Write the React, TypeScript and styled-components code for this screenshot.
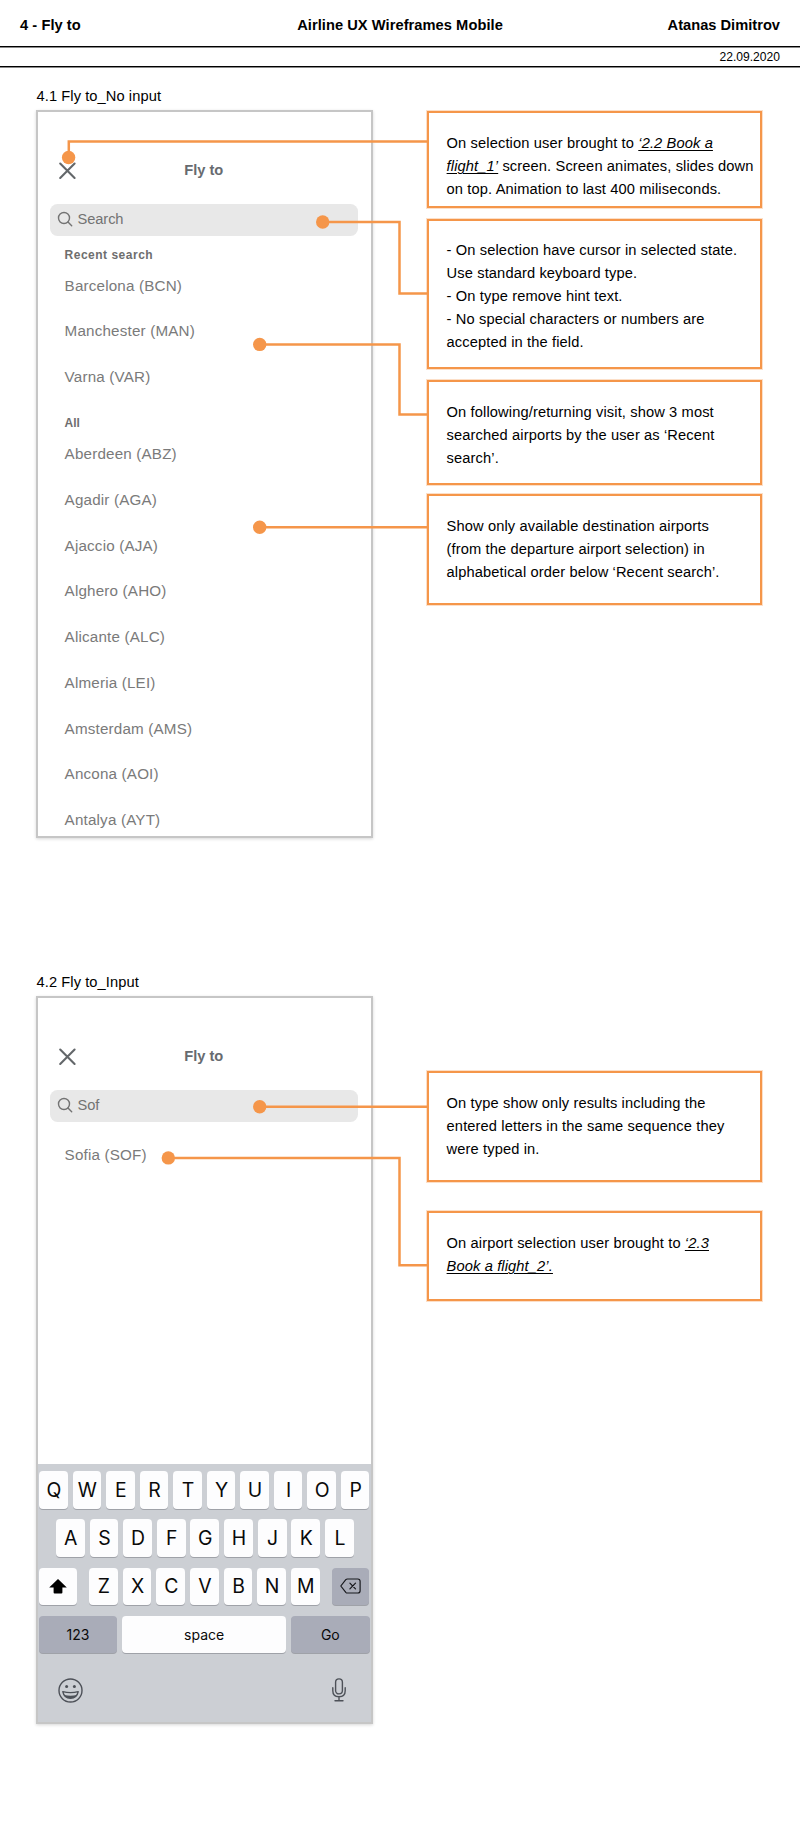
import React from 'react';
import styled, { createGlobalStyle } from 'styled-components';

const ORANGE = '#f5964a';

const GlobalStyle = createGlobalStyle`
  * { box-sizing: border-box; }
  body {
    margin: 0;
    background: #fff;
    font-family: "Liberation Sans", Arial, Helvetica, sans-serif;
    font-size: 14.67px;
    color: #000;
  }
`;

const Page = styled.main`
  width: 800px;
  height: 1826px;
  overflow: hidden;
  background: #fff;
`;

const PageHeader = styled.header`
  display: grid;
  grid-template-columns: 1fr auto 1fr;
  height: 46px;
  padding: 3px 20px 0;
  align-items: center;
  font-weight: 700;
  letter-spacing: 0.05px;
`;

const Author = styled.span`
  text-align: right;
  letter-spacing: 0;
`;

const DateBar = styled.div`
  height: 21px;
  padding: 0 20px;
  border-top: 1px solid #000;
  border-bottom: 1px solid #000;
  box-shadow: inset 0 1px 0 #8a8a8a, 0 1px 0 #8a8a8a;
  display: flex;
  justify-content: flex-end;
  align-items: center;
  font-size: 12.1px;
`;

const Section = styled.section<{ $height: number }>`
  position: relative;
  display: flex;
  flex-direction: column;
  height: ${(p) => p.$height}px;
  padding-left: 36px;
`;

const SectionLabel = styled.h2`
  margin: 0;
  height: 43px;
  padding: 0 0 5px 0.5px;
  display: flex;
  align-items: flex-end;
  font-size: 14.67px;
  font-weight: 400;
  line-height: 18px;
  letter-spacing: 0.08px;
`;

const Board = styled.div`
  display: flex;
  align-items: flex-start;
  gap: 54px;
`;

const Phone = styled.div`
  display: flex;
  flex-direction: column;
  width: 337px;
  height: 728px;
  border: 2px solid #c6c6c6;
  box-shadow: 0 1px 3px rgba(0, 0, 0, 0.16);
  overflow: hidden;
`;

const NavBar = styled.div`
  display: grid;
  flex: none;
  grid-template-columns: 1fr auto 1fr;
  align-items: center;
  height: 91.7px;
  padding: 26px 21.5px 0 21px;
  color: #676b70;
`;

const NavTitle = styled.span`
  padding: 0 1px 1px 0;
  font-weight: 700;
`;

const Icon = styled.svg`
  display: block;
  flex: none;
  overflow: visible;
`;

const SearchField = styled.div`
  display: flex;
  flex: none;
  align-items: center;
  gap: 4.7px;
  height: 32.3px;
  margin: 0 13px 0 12.3px;
  padding-left: 7.6px;
  border-radius: 7.5px;
  background: #e8e8e8;
  color: #737373;
  letter-spacing: -0.1px;
`;

const Query = styled.span`
  padding-bottom: 1px;
`;

const ListHeading = styled.h3<{ $height: number; $spacing?: number }>`
  display: flex;
  flex: none;
  align-items: flex-end;
  height: ${(p) => p.$height}px;
  margin: 0;
  padding: 0 0 0.6px 26.6px;
  font-size: 12px;
  line-height: 14px;
  font-weight: 700;
  letter-spacing: ${(p) => p.$spacing ?? 0}px;
  color: #6e6e6e;
`;

const Airport = styled.div`
  flex: none;
  height: 45.75px;
  padding-left: 26.6px;
  line-height: 45.75px;
  font-size: 15.2px;
  letter-spacing: 0.18px;
  color: #7a7a7a;
`;

const ResultList = styled.div`
  flex: 1;
  padding-top: 10.5px;
`;

const Notes = styled.div<{ $top?: number }>`
  display: flex;
  flex-direction: column;
  padding-top: ${(p) => p.$top ?? 1}px;
`;

const Note = styled.p<{ $height: number; $gap?: number; $inset?: number }>`
  width: 335px;
  height: ${(p) => p.$height}px;
  margin: 0 0 ${(p) => p.$gap ?? 0}px;
  padding: ${(p) => p.$inset ?? 19.2}px 0 0 17.6px;
  border: 2px solid ${ORANGE};
  box-shadow: 0 0 0 1px rgba(245, 150, 74, 0.3);
  line-height: 22.9px;
  letter-spacing: 0.12px;
  white-space: nowrap;
`;

const ScreenLink = styled.em`
  text-decoration: underline;
  text-decoration-thickness: 1px;
  text-underline-offset: 2px;
`;

const Overlay = styled.svg`
  position: absolute;
  left: 0;
  top: 0;
  pointer-events: none;
`;

const Keyboard = styled.div`
  display: flex;
  flex: none;
  flex-direction: column;
  gap: 10.7px;
  height: 258px;
  padding: 7px 1.5px 0 1px;
  background: #cccfd4;
  font-family: Inter, "Liberation Sans", sans-serif;
`;

const KeyRow = styled.div<{ $between?: boolean; $indent?: number }>`
  display: flex;
  justify-content: ${(p) => (p.$between ? 'space-between' : 'center')};
  gap: 4.9px;
  padding-left: ${(p) => p.$indent ?? 0}px;
`;

const KeyGroup = styled.div`
  display: flex;
  gap: 4.9px;
`;

const Key = styled.div<{ $width?: number; $dark?: boolean; $word?: boolean }>`
  display: flex;
  align-items: center;
  justify-content: center;
  width: ${(p) => p.$width ?? 28.75}px;
  height: 37.6px;
  padding-left: ${(p) => (p.$word || p.$width ? 0 : 1)}px;
  border-radius: 4px;
  background: ${(p) => (p.$dark ? '#a9acb8' : '#fdfdfe')};
  box-shadow: 0 1px 0 #9fa2a8;
  font-size: ${(p) => (p.$word ? 14 : 19.4)}px;
  color: #0a0a0a;
`;

const KeyboardFooter = styled.div`
  display: flex;
  justify-content: space-between;
  align-items: flex-start;
  padding: 14.2px 23.5px 0 19px;
`;

const CloseIcon = () => (
  <Icon width="16" height="16" viewBox="0 0 16 16" fill="none" stroke="#63676a" strokeWidth="2.1" strokeLinecap="round">
    <path d="M1.2 0.6 15.6 14.9M15.6 0.6 1.2 14.9" />
  </Icon>
);

const SearchIcon = () => (
  <Icon width="15" height="15" viewBox="0 0 15 15" fill="none" stroke="#737373" strokeWidth="1.4" strokeLinecap="round">
    <circle cx="6" cy="6" r="5.5" />
    <path d="M10 10 13.7 13.7" />
  </Icon>
);

const ShiftIcon = () => (
  <Icon width="18" height="15" viewBox="0 0 18 15" fill="#000">
    <path d="M9 0 17.8 8.4H13.4V13.6Q13.4 14.6 12.4 14.6H5.6Q4.6 14.6 4.6 13.6V8.4H0.2Z" />
  </Icon>
);

const BackspaceIcon = () => (
  <Icon width="21" height="16" viewBox="0 0 21 16" fill="none" stroke="#17181c" strokeWidth="1.2" strokeLinejoin="round" strokeLinecap="round">
    <path d="M7.4 1H17.8Q20.1 1 20.1 3.3V12.7Q20.1 15 17.8 15H7.4Q6.5 15 5.8 14.3L0.8 8 5.8 1.7Q6.5 1 7.4 1Z" />
    <path d="M9.9 5.1 15.5 10.9M15.5 5.1 9.9 10.9" />
  </Icon>
);

const SmileIcon = () => (
  <Icon width="25" height="25" viewBox="0 0 25 25" fill="none" stroke="#4d5158" strokeWidth="1.4">
    <circle cx="12.5" cy="12.5" r="11.5" />
    <circle cx="8.6" cy="8.6" r="1.5" fill="#4d5158" stroke="none" />
    <circle cx="16.4" cy="8.6" r="1.5" fill="#4d5158" stroke="none" />
    <path d="M4.8 13.6Q12.5 15.6 20.2 13.6Q18.9 20.2 12.5 20.2Q6.1 20.2 4.8 13.6Z" strokeLinejoin="round" />
    <path d="M6.2 17Q12.5 18.4 18.8 17Q16.8 20.2 12.5 20.2Q8.2 20.2 6.2 17Z" fill="#4d5158" stroke="none" />
  </Icon>
);

const MicIcon = () => (
  <Icon width="14" height="24" viewBox="0 0 14 24" fill="none" stroke="#4d5158" strokeWidth="1.4" strokeLinecap="round">
    <rect x="3.6" y="0.9" width="6.8" height="15" rx="3.4" />
    <path d="M0.8 9.8V12.8Q0.8 18.7 7 18.7Q13.2 18.7 13.2 12.8V9.8M7 18.7V22.6M3 22.7H11" />
  </Icon>
);

type Connector = { x: number; y: number; path: string };

const Connectors = ({ height, items }: { height: number; items: Connector[] }) => (
  <Overlay width="800" height={height} viewBox={`0 0 800 ${height}`}>
    {items.map((c) => (
      <g key={c.path}>
        <path d={c.path} fill="none" stroke={ORANGE} strokeWidth="2.5" />
        <circle cx={c.x} cy={c.y} r="6.7" fill={ORANGE} />
      </g>
    ))}
  </Overlay>
);

const ScreenTop = ({ query }: { query: string }) => (
  <>
    <NavBar>
      <CloseIcon />
      <NavTitle>Fly to</NavTitle>
    </NavBar>
    <SearchField>
      <SearchIcon />
      <Query>{query}</Query>
    </SearchField>
  </>
);

const Letters = ({ row }: { row: string }) => (
  <>
    {row.split('').map((letter) => (
      <Key key={letter}>{letter}</Key>
    ))}
  </>
);

const recent = ['Barcelona (BCN)', 'Manchester (MAN)', 'Varna (VAR)'];
const all = [
  'Aberdeen (ABZ)',
  'Agadir (AGA)',
  'Ajaccio (AJA)',
  'Alghero (AHO)',
  'Alicante (ALC)',
  'Almeria (LEI)',
  'Amsterdam (AMS)',
  'Ancona (AOI)',
  'Antalya (AYT)',
];

export default function App() {
  return (
    <Page>
      <GlobalStyle />
      <PageHeader>
        <span>4 - Fly to</span>
        <span>Airline UX Wireframes Mobile</span>
        <Author>Atanas Dimitrov</Author>
      </PageHeader>
      <DateBar>22.09.2020</DateBar>

      <Section $height={886}>
        <SectionLabel>4.1 Fly to_No input</SectionLabel>
        <Board>
          <Phone>
            <ScreenTop query="Search" />
            <ListHeading $height={26.7} $spacing={0.5}>Recent search</ListHeading>
            {recent.map((name) => (
              <Airport key={name}>{name}</Airport>
            ))}
            <ListHeading $height={31.1}>All</ListHeading>
            {all.map((name) => (
              <Airport key={name}>{name}</Airport>
            ))}
          </Phone>
          <Notes>
            <Note $height={97} $gap={11}>
              On selection user brought to <ScreenLink>‘2.2 Book a<br />flight_1’</ScreenLink> screen. Screen animates, slides down
              <br />
              on top. Animation to last 400 miliseconds.
            </Note>
            <Note $height={150} $gap={11} $inset={18.3}>
              - On selection have cursor in selected state.
              <br />
              Use standard keyboard type.
              <br />
              - On type remove hint text.
              <br />
              - No special characters or numbers are
              <br />
              accepted in the field.
            </Note>
            <Note $height={105} $gap={9}>
              On following/returning visit, show 3 most
              <br />
              searched airports by the user as ‘Recent
              <br />
              search’.
            </Note>
            <Note $height={111}>
              Show only available destination airports
              <br />
              (from the departure airport selection) in
              <br />
              alphabetical order below ‘Recent search’.
            </Note>
          </Notes>
        </Board>
        <Connectors
          height={886}
          items={[
            { x: 68.6, y: 90.5, path: 'M68.8 90V74.5H428' },
            { x: 322.7, y: 155, path: 'M322 155H399.5V226.5H428' },
            { x: 259.7, y: 277.4, path: 'M259 277.4H399.5V347.4H428' },
            { x: 259.7, y: 460.3, path: 'M259 460.3H428' },
          ]}
        />
      </Section>

      <Section $height={873}>
        <SectionLabel>4.2 Fly to_Input</SectionLabel>
        <Board>
          <Phone>
            <ScreenTop query="Sof" />
            <ResultList>
              <Airport>Sofia (SOF)</Airport>
            </ResultList>
            <Keyboard>
              <KeyRow><Letters row="QWERTYUIOP" /></KeyRow>
              <KeyRow $indent={1.2}><Letters row="ASDFGHJKL" /></KeyRow>
              <KeyRow $between>
                <Key $width={37.8}><ShiftIcon /></Key>
                <KeyGroup><Letters row="ZXCVBNM" /></KeyGroup>
                <Key $width={37.5} $dark><BackspaceIcon /></Key>
              </KeyRow>
              <KeyRow $between>
                <Key $width={78} $dark $word>123</Key>
                <Key $width={163.8} $word>space</Key>
                <Key $width={78.3} $dark $word>Go</Key>
              </KeyRow>
              <KeyboardFooter>
                <SmileIcon />
                <MicIcon />
              </KeyboardFooter>
            </Keyboard>
          </Phone>
          <Notes $top={75}>
            <Note $height={111} $gap={29}>
              On type show only results including the
              <br />
              entered letters in the same sequence they
              <br />
              were typed in.
            </Note>
            <Note $height={90}>
              On airport selection user brought to <ScreenLink>‘2.3<br />Book a flight_2’.</ScreenLink>
            </Note>
          </Notes>
        </Board>
        <Connectors
          height={873}
          items={[
            { x: 259.7, y: 153.7, path: 'M259 153.7H428' },
            { x: 168.3, y: 204.9, path: 'M168 204.9H399.5V312.3H428' },
          ]}
        />
      </Section>
    </Page>
  );
}
